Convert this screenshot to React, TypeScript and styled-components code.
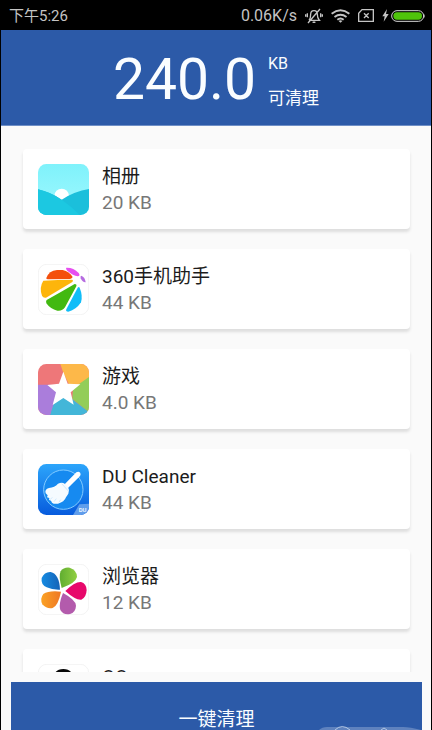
import React from 'react';
import styled, { createGlobalStyle } from 'styled-components';

const GlobalStyle = createGlobalStyle`
  *, *::before, *::after { box-sizing: border-box; }
  html, body { margin: 0; padding: 0; background: #000; }
  body { font-family: Roboto, "Noto Sans CJK SC", sans-serif; }
`;

const Screen = styled.main`
  display: flex;
  flex-direction: column;
  height: 100vh;
  margin: 0 1px;
  overflow: hidden;
  background: #fafafa;
`;

const StatusBar = styled.div`
  display: flex;
  flex: none;
  align-items: center;
  justify-content: space-between;
  height: 30px;
  padding: 1px 6px 0 8px;
  background: #000;
  color: #c4c4c4;
  font-size: 15px;
  line-height: 20px;
`;

const StatusGroup = styled.div`
  display: flex;
  align-items: center;
  gap: 8px;
`;

const Speed = styled.span`
  font-size: 16px;
`;

const Power = styled.span`
  display: flex;
  align-items: center;
  gap: 2px;
`;

const Summary = styled.header`
  display: flex;
  flex: none;
  align-items: center;
  justify-content: center;
  gap: 12px;
  height: 96px;
  background: #2c5aa8;
  color: #fafdff;
  border-bottom: 1px solid #6f8fc6;
`;

const Total = styled.strong`
  font-size: 57px;
  font-weight: 400;
  line-height: 68px;
  padding-top: 4px;
`;

const Units = styled.div`
  display: flex;
  flex-direction: column;
  gap: 10px;
  padding-top: 6px;
  font-size: 16px;
  line-height: 24px;
`;

const Caption = styled.span`
  font-size: 17px;
`;

const Apps = styled.ul`
  display: flex;
  flex: 1;
  flex-direction: column;
  gap: 20px;
  min-height: 0;
  margin: 0 0 10px;
  padding: 23px 21px 0 22px;
  overflow: hidden;
  list-style: none;
`;

const Card = styled.li`
  display: flex;
  flex: none;
  align-items: center;
  gap: 13px;
  height: 80px;
  padding: 0 15px;
  border-radius: 4px;
  background: #fff;
  box-shadow: 0 3px 3px #dedede;
`;

const Icon = styled.svg`
  flex: none;
  width: 51px;
  height: 51px;
`;

const Details = styled.div`
  padding-top: 2px;
  font-size: 19px;
  line-height: 26px;
`;

const Name = styled.div`
  color: #1c1c1c;
`;

const Size = styled.div`
  color: #777;
`;

const Footer = styled.footer`
  position: relative;
  flex: none;
  height: 48px;
  padding: 0 9px 0 10px;
  overflow: hidden;
`;

const CleanButton = styled.button`
  display: block;
  width: 100%;
  height: 76px;
  border: 0;
  background: #2c5aa8;
  color: #fafdff;
  font-family: inherit;
  font-size: 19px;
  line-height: 26px;
`;

const Watermark = styled.svg`
  position: absolute;
  right: 6px;
  bottom: 0;
  width: 106px;
  height: 6px;
`;

const MuteIcon = () => (
  <svg width="18" height="16" viewBox="0 0 54 48" fill="none" stroke="#c4c4c4" strokeWidth="4" aria-hidden="true">
    <path d="M13 37h30c-5-5-6-8-6-18 0-6-4-11-10-11s-10 5-10 11c0 9 0 13-5 18M23 41q4 4 8 0M45 3 9 45M7 16v12M2 19v7M47 16v12M52 19v7" />
  </svg>
);

const WifiIcon = () => (
  <svg width="19" height="14" viewBox="0 0 60 42" fill="none" stroke="#c4c4c4" strokeWidth="6" aria-hidden="true">
    <path d="M2 14q28-22 56 0M11 24q19-14 38 0M20 33q10-8 20 0" />
    <path d="m24 37 6 5 6-5q-6-5-12 0z" fill="#c4c4c4" stroke="none" />
  </svg>
);

const SimIcon = () => (
  <svg width="16" height="13" viewBox="0 0 48 39" fill="none" stroke="#c4c4c4" strokeWidth="4" aria-hidden="true">
    <path d="M12 2h34v35H2V13zM18 13l14 14M32 13 18 27" />
  </svg>
);

const BoltIcon = () => (
  <svg width="7" height="13" viewBox="0 0 21 39" fill="#c4c4c4" aria-hidden="true">
    <path d="M15 0 1 22h7L5 38l15-23h-8z" />
  </svg>
);

const BatteryIcon = () => (
  <svg width="34" height="12" viewBox="0 0 102 36" aria-hidden="true">
    <rect x="2" y="2" width="96" height="32" rx="16" fill="#000" stroke="#d6d6d6" strokeWidth="3" />
    <rect x="7" y="7" width="86" height="22" rx="11" fill="#4fc30b" />
    <path d="M99 12q4 6 0 12z" fill="#d6d6d6" />
  </svg>
);

const GalleryIcon = () => (
  <Icon viewBox="84 66 153 153" aria-hidden="true">
    <defs>
      <clipPath id="gallery"><rect x="84" y="66" width="153" height="153" rx="25" /></clipPath>
      <linearGradient id="sky" x2="0" y2="1"><stop stopColor="#7ff2fb" /><stop offset="1" stopColor="#a0f8ff" /></linearGradient>
    </defs>
    <g clipPath="url(#gallery)">
      <path d="M84 66h153v153H84z" fill="url(#sky)" />
      <circle cx="155" cy="162" r="22" fill="#fff" />
      <path d="M84 142q36 8 71 31 38-25 82-32v78H84z" fill="#1bbfdb" />
      <path d="M84 142q36 8 71 31 28 19 54 46H84z" fill="#1cc8e1" />
    </g>
  </Icon>
);

const AssistantIcon = () => (
  <Icon viewBox="39 37 153 153" aria-hidden="true">
    <rect x="40" y="38" width="151" height="151" rx="25" fill="#fff" stroke="#ededed" strokeWidth="2" />
    <path d="M64 79q8-22 32-24h17q20 5 30 21-2 5-8 6l-66 1q-6 0-5-4z" fill="#f44f0c" />
    <path d="M55 87q43-3 87-3 4 3 0 7l-79 47q-8 2-12-6-9-25 4-45z" fill="#fdb50b" />
    <path d="M65 145q43-24 84-48 7 0 5 7l-34 63q-8 12-23 10-21-5-33-22-2-7 1-10z" fill="#42b911" />
    <path d="m164 108q10 24 4 44-14 22-38 28-9 0-6-7 17-33 34-65 3-4 6 0z" fill="#11bdf8" />
    <path d="M124 48q21-1 37 16 6 9-3 10-14-2-29-15-8-8-5-11z" fill="#e64ff0" />
    <path d="M169 72q11 4 13 20-9 1-15-12-2-8 2-8z" fill="#b56be0" />
  </Icon>
);

const GamesIcon = () => (
  <Icon viewBox="39 39 153 153" aria-hidden="true">
    <clipPath id="games"><rect x="39" y="39" width="153" height="153" rx="25" /></clipPath>
    <g clipPath="url(#games)">
      <path d="M39 39h153v153H39z" fill="#ee7779" />
      <path d="M106 39h86v42l-52 35-25-51z" fill="#fdb849" />
      <path d="M192 78v106l-50-40 2-32z" fill="#93cd59" />
      <path d="m88 138 27-14 77 60v8H75z" fill="#43b6d8" />
      <path d="M39 101h38l22 20-24 71H39z" fill="#aa7ddb" />
    </g>
    <path d="m115 62 13 36 38 2-29 24 9 37-31-20-32 21 10-38-26-22 35-4z" fill="#fff" />
  </Icon>
);

const CleanerIcon = () => (
  <Icon viewBox="39 39 153 153" aria-hidden="true">
    <defs>
      <linearGradient id="cleaner" x2="0" y2="1"><stop stopColor="#2ca5fb" /><stop offset="1" stopColor="#075bdd" /></linearGradient>
      <clipPath id="cleanerShape"><rect x="39" y="39" width="153" height="153" rx="25" /></clipPath>
    </defs>
    <g clipPath="url(#cleanerShape)">
      <path d="M39 39h153v153H39z" fill="url(#cleaner)" />
      <circle cx="115" cy="116" r="59" fill="#168af0" stroke="#83cbff" strokeWidth="3" />
      <path d="m119 100 35-36q7-5 12 2 3 6-3 11l-34 34z" fill="#fff" />
      <path d="M99 98q12-5 20 0l10 10q6 10 1 20l-7 11q-5 14-24 19-12 2-18-3l-3-6-6-2 1-6-7-2 2-6-6-6q-4-12 10-16 17-2 27-13z" fill="#f5fbff" />
      <path d="m110 98 20 22M82 139l-7 7M94 143l-7 9M107 146l-5 8" stroke="#b9e0fc" strokeWidth="2" fill="none" />
      <path d="m163 160 29-2v34h-48z" fill="#609deb" />
      <text x="161" y="184" fill="#e5f3ff" fontFamily="Roboto, sans-serif" fontSize="18" fontWeight="700">DU</text>
    </g>
  </Icon>
);

const BrowserIcon = () => (
  <Icon viewBox="39 38 153 153" aria-hidden="true">
    <defs>
      <linearGradient id="blue"><stop stopColor="#158be2" /><stop offset="1" stopColor="#1663b7" /></linearGradient>
      <linearGradient id="green"><stop stopColor="#60ad30" /><stop offset="1" stopColor="#91cf43" /></linearGradient>
      <linearGradient id="orange"><stop stopColor="#fba224" /><stop offset="1" stopColor="#ee7724" /></linearGradient>
    </defs>
    <rect x="40" y="39" width="151" height="151" rx="25" fill="#fff" stroke="#ededed" strokeWidth="2" />
    <path d="M105 115Q103 68 77 62q-19-1-27 18-3 20 15 28 17 8 40 7z" fill="url(#blue)" />
    <path d="M110 110q-10-36-3-50 9-13 27-11 22 7 22 28-4 18-46 33z" fill="url(#green)" />
    <path d="M121 119q28-28 47-27 16 4 17 24-1 22-16 29-17 2-48-26z" fill="#e7086b" />
    <path d="M114 125q38 20 39 38-1 20-18 25-20 4-29-12-6-17 8-51z" fill="#b35bac" />
    <path d="M108 121q-37-4-53 7-11 14-3 31 14 15 31 11 17-8 25-49z" fill="url(#orange)" />
  </Icon>
);

const ChatIcon = () => (
  <Icon viewBox="0 0 153 153" aria-hidden="true">
    <rect x="1" y="1" width="151" height="151" rx="25" fill="#fff" stroke="#ededed" strokeWidth="2" />
    <path d="M44 55q0-40 32-40t32 40l15 44-14-2-15 35H58L42 97l-14 2z" fill="#080808" />
    <circle cx="66" cy="46" r="8" fill="#fff" /><circle cx="86" cy="46" r="8" fill="#fff" />
    <path d="M51 67q25 14 50 0" stroke="#f7b51c" strokeWidth="9" fill="none" />
  </Icon>
);

const items = [
  { name: '相册', size: '20 KB', Picture: GalleryIcon },
  { name: '360手机助手', size: '44 KB', Picture: AssistantIcon },
  { name: '游戏', size: '4.0 KB', Picture: GamesIcon },
  { name: 'DU Cleaner', size: '44 KB', Picture: CleanerIcon },
  { name: '浏览器', size: '12 KB', Picture: BrowserIcon },
  { name: 'QQ', size: '16 KB', Picture: ChatIcon },
];

export default function App() {
  return (
    <>
      <GlobalStyle />
      <Screen>
        <StatusBar>
          <span>下午5:26</span>
          <StatusGroup>
            <Speed>0.06K/s</Speed>
            <MuteIcon />
            <WifiIcon />
            <SimIcon />
            <Power><BoltIcon /><BatteryIcon /></Power>
          </StatusGroup>
        </StatusBar>
        <Summary>
          <Total>240.0</Total>
          <Units>
            <span>KB</span>
            <Caption>可清理</Caption>
          </Units>
        </Summary>
        <Apps>
          {items.map(({ name, size, Picture }) => (
            <Card key={name}>
              <Picture />
              <Details>
                <Name>{name}</Name>
                <Size>{size}</Size>
              </Details>
            </Card>
          ))}
        </Apps>
        <Footer>
          <CleanButton type="button">一键清理</CleanButton>
          <Watermark viewBox="0 0 106 6" aria-hidden="true">
            <path d="M0 6q3-3 8-3h76q7 0 18 3z" fill="#9db4d9" opacity=".45" />
            <path d="M16 6q7-7 15 0M62 6l3-2 3 2" fill="none" stroke="#d9e5f5" opacity=".7" />
          </Watermark>
        </Footer>
      </Screen>
    </>
  );
}
